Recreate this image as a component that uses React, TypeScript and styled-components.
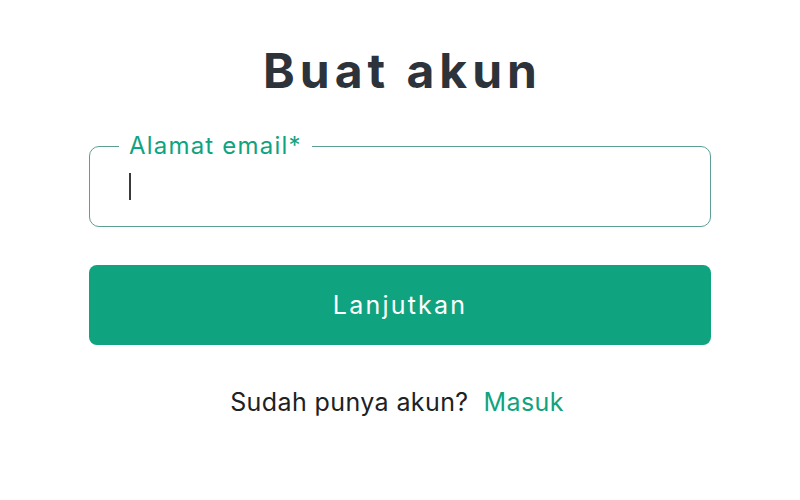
import React from 'react';
import styled, { createGlobalStyle } from 'styled-components';

const GlobalStyle = createGlobalStyle`
  html, body {
    margin: 0;
    padding: 0;
    background: #fff;
  }
  body {
    font-family: Inter, "Liberation Sans", Arial, sans-serif;
    color: #2d333a;
  }
`;

const Page = styled.main`
  width: 800px;
  height: 500px;
  display: flex;
  flex-direction: column;
  align-items: center;
  padding-top: 43px;
  box-sizing: border-box;
`;

const Title = styled.h1`
  margin: 0 -5px 0 0;
  font-size: 48px;
  font-weight: 700;
  line-height: 56px;
  letter-spacing: 5px;
  color: #2d333a;
`;

const Form = styled.form`
  width: 622px;
  margin-top: 35px;
  display: flex;
  flex-direction: column;
`;

const Field = styled.fieldset`
  margin: 0;
  padding: 0;
  border: 1px solid #5c9e94;
  border-radius: 10px;
`;

const Legend = styled.legend`
  margin-left: 29px;
  padding: 0 10px;
  font-size: 24px;
  line-height: 24px;
  letter-spacing: 1.2px;
  color: #10a37f;
`;

const InputRow = styled.div`
  height: 53px;
  padding-left: 39px;
  box-sizing: border-box;
`;

const Caret = styled.span`
  display: block;
  width: 2px;
  height: 27px;
  margin-top: 15px;
  background: #3a3a3a;
`;

const Button = styled.button`
  margin-top: 38px;
  height: 80px;
  border: none;
  border-radius: 8px;
  background: #10a37f;
  color: #fff;
  font: inherit;
  font-size: 25px;
  letter-spacing: 2.2px;
  cursor: pointer;
`;

const Footer = styled.p`
  margin: 42px 0 0 -6px;
  text-align: center;
  font-size: 25px;
  line-height: 30px;
  letter-spacing: 0.4px;
  color: #202123;
`;

const Link = styled.a`
  margin-left: 15px;
  color: #10a37f;
  text-decoration: none;
`;

const App: React.FC = () => (
  <>
    <GlobalStyle />
    <Page>
      <Title>Buat akun</Title>
      <Form onSubmit={(e) => e.preventDefault()}>
        <Field>
          <Legend>Alamat email*</Legend>
          <InputRow>
            <Caret />
          </InputRow>
        </Field>
        <Button type="submit">Lanjutkan</Button>
      </Form>
      <Footer>
        Sudah punya akun?<Link href="#">Masuk</Link>
      </Footer>
    </Page>
  </>
);

export default App;
